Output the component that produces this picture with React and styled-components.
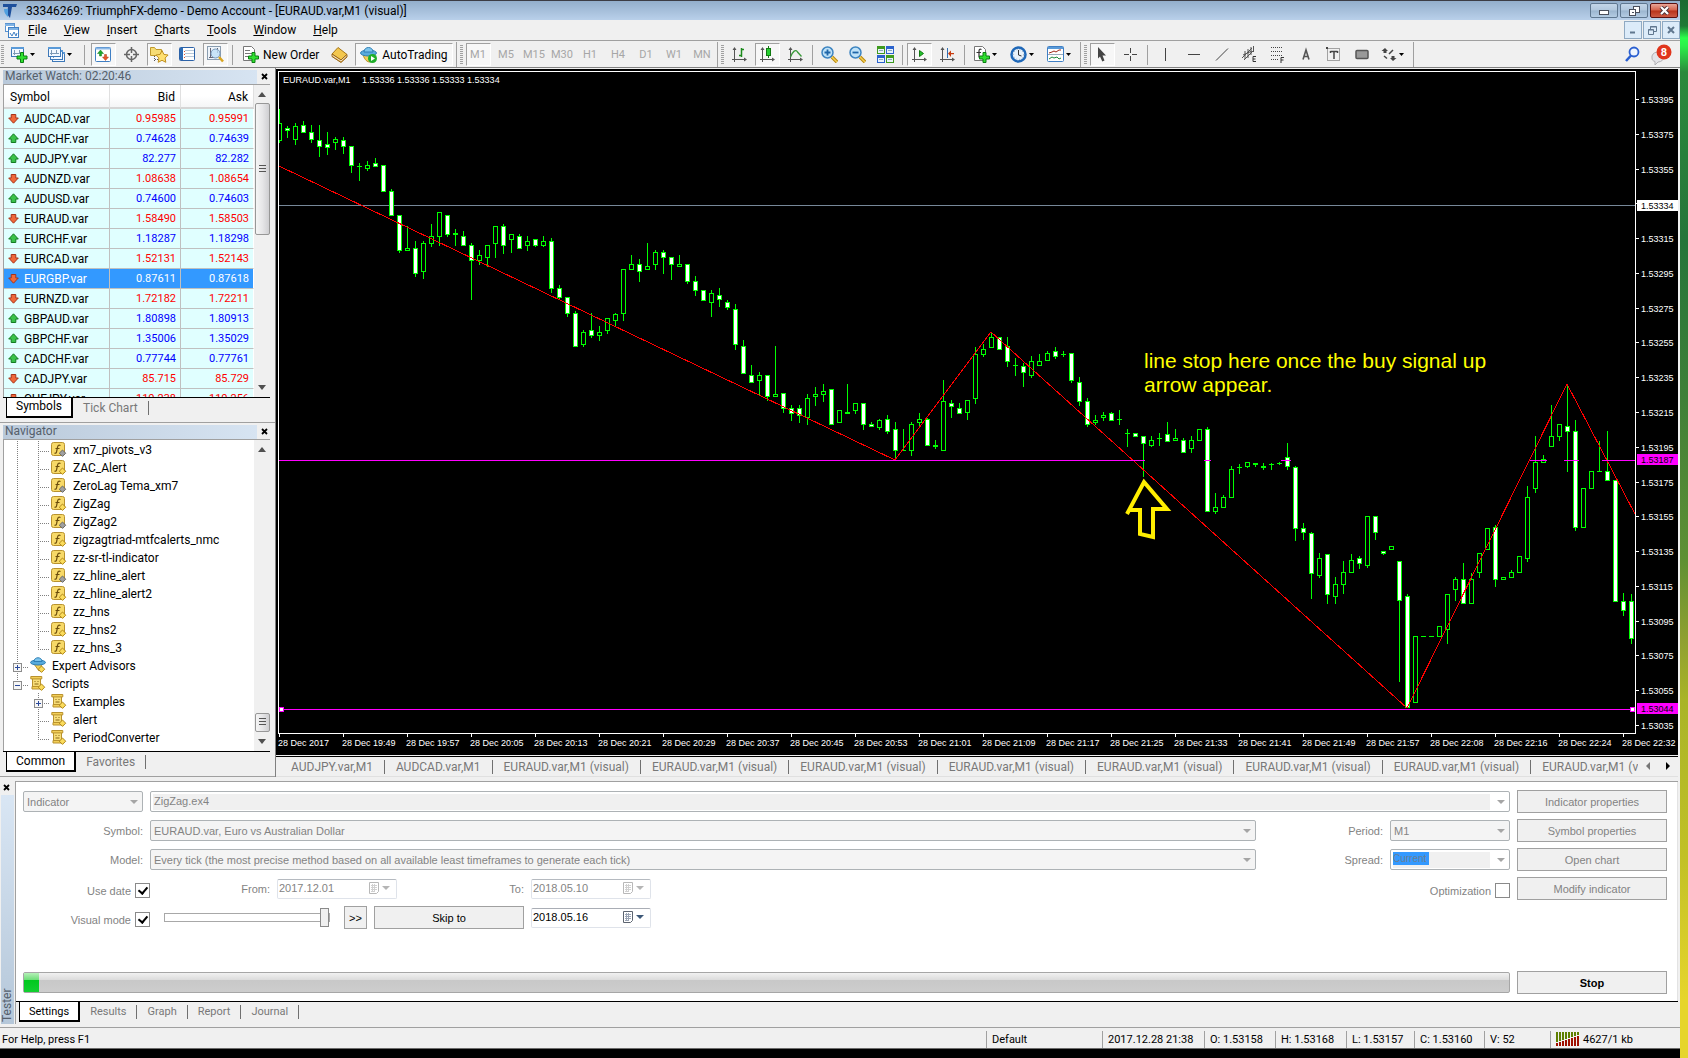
import React from 'react'
import styled, { createGlobalStyle, css } from 'styled-components'

const GlobalStyle = createGlobalStyle`
  * { box-sizing: border-box; }
  body {
    margin: 0;
    background: #000;
    font-family: Roboto, "Liberation Sans", sans-serif;
    font-size: 12px;
    color: #000;
  }
  button, input, select { font-family: inherit; font-size: inherit; margin: 0; }
`

/* ---------- data ---------- */

const symbols = [
  ['AUDCAD.var', '0.95985', '0.95991', 'down'],
  ['AUDCHF.var', '0.74628', '0.74639', 'up'],
  ['AUDJPY.var', '82.277', '82.282', 'up'],
  ['AUDNZD.var', '1.08638', '1.08654', 'down'],
  ['AUDUSD.var', '0.74600', '0.74603', 'up'],
  ['EURAUD.var', '1.58490', '1.58503', 'down'],
  ['EURCHF.var', '1.18287', '1.18298', 'up'],
  ['EURCAD.var', '1.52131', '1.52143', 'down'],
  ['EURGBP.var', '0.87611', '0.87618', 'down'],
  ['EURNZD.var', '1.72182', '1.72211', 'down'],
  ['GBPAUD.var', '1.80898', '1.80913', 'up'],
  ['GBPCHF.var', '1.35006', '1.35029', 'up'],
  ['CADCHF.var', '0.77744', '0.77761', 'up'],
  ['CADJPY.var', '85.715', '85.729', 'down'],
  ['CHFJPY.var', '110.238', '110.256', 'down'],
]

const tree = [
  { name: 'xm7_pivots_v3', icon: 'fx', grey: true, trunk: 'full', branch: 'full' },
  { name: 'ZAC_Alert', icon: 'fx', trunk: 'full', branch: 'full' },
  { name: 'ZeroLag Tema_xm7', icon: 'fx', grey: true, trunk: 'full', branch: 'full' },
  { name: 'ZigZag', icon: 'fx', trunk: 'full', branch: 'full' },
  { name: 'ZigZag2', icon: 'fx', grey: true, trunk: 'full', branch: 'full' },
  { name: 'zigzagtriad-mtfcalerts_nmc', icon: 'fx', trunk: 'full', branch: 'full' },
  { name: 'zz-sr-tl-indicator', icon: 'fx', trunk: 'full', branch: 'full' },
  { name: 'zz_hline_alert', icon: 'fx', grey: true, trunk: 'full', branch: 'full' },
  { name: 'zz_hline_alert2', icon: 'fx', trunk: 'full', branch: 'full' },
  { name: 'zz_hns', icon: 'fx', trunk: 'full', branch: 'full' },
  { name: 'zz_hns2', icon: 'fx', trunk: 'full', branch: 'full' },
  { name: 'zz_hns_3', icon: 'fx', trunk: 'full', branch: 'half' },
  { name: 'Expert Advisors', icon: 'expert', top: true, trunk: 'full', box: '+' },
  { name: 'Scripts', icon: 'script', top: true, trunk: 'half', box: '-' },
  { name: 'Examples', icon: 'script', branch: 'full', box: '+' },
  { name: 'alert', icon: 'script', branch: 'full' },
  { name: 'PeriodConverter', icon: 'script', branch: 'half' },
]

// high, body top, body bottom, low, filled
const candles = [
  [109, 123, 141, 143, 0], [126, 128, 131, 138, 1], [123, 126, 140, 145, 0], [121, 125, 133, 133, 1],
  [125, 132, 140, 143, 1], [125, 140, 147, 157, 1], [132, 144, 148, 155, 1], [137, 139, 143, 150, 0],
  [137, 140, 147, 154, 1], [146, 146, 166, 173, 1], [163, 166, 166, 181, 0], [161, 165, 169, 171, 0],
  [158, 163, 167, 167, 1], [165, 165, 192, 192, 1], [189, 191, 216, 216, 1], [215, 215, 251, 253, 1],
  [226, 248, 251, 251, 0], [241, 248, 274, 277, 1], [241, 243, 272, 279, 0], [224, 236, 244, 247, 0],
  [212, 212, 237, 246, 0], [215, 215, 235, 237, 1], [229, 233, 235, 246, 0], [231, 236, 246, 246, 1],
  [243, 245, 261, 300, 1], [250, 255, 261, 265, 0], [245, 245, 258, 267, 0], [226, 226, 244, 258, 0],
  [224, 226, 246, 254, 1], [234, 234, 240, 253, 0], [234, 236, 249, 249, 1], [236, 241, 246, 251, 0],
  [239, 239, 246, 247, 1], [236, 241, 246, 247, 0], [238, 241, 289, 293, 1], [285, 288, 298, 299, 1],
  [297, 297, 314, 317, 1], [311, 313, 347, 347, 1], [330, 332, 345, 347, 0], [313, 330, 336, 338, 1],
  [326, 332, 336, 341, 0], [318, 318, 331, 334, 0], [313, 314, 321, 326, 0], [269, 269, 314, 321, 0],
  [255, 264, 270, 270, 0], [259, 264, 272, 282, 1], [243, 266, 270, 270, 0], [250, 252, 265, 270, 0],
  [250, 252, 258, 274, 1], [257, 257, 265, 280, 1], [255, 264, 267, 267, 0], [264, 264, 282, 284, 1],
  [276, 281, 291, 296, 1], [290, 290, 301, 301, 1], [290, 293, 303, 317, 0], [288, 295, 300, 307, 1],
  [300, 302, 308, 310, 1], [304, 309, 345, 350, 1], [340, 346, 374, 374, 1], [365, 375, 383, 383, 1],
  [372, 375, 381, 396, 0], [375, 375, 397, 401, 1], [346, 394, 397, 397, 0], [393, 393, 409, 413, 1],
  [405, 408, 414, 421, 1], [405, 408, 416, 423, 1], [394, 398, 418, 425, 0], [387, 394, 397, 406, 0],
  [384, 391, 395, 402, 0], [389, 389, 425, 425, 1], [410, 410, 423, 423, 0], [384, 412, 414, 414, 0],
  [403, 403, 411, 414, 0], [403, 403, 425, 430, 1], [422, 424, 427, 427, 1], [419, 420, 428, 430, 0],
  [415, 419, 432, 434, 1], [422, 429, 451, 460, 1], [429, 450, 451, 451, 0], [422, 424, 451, 456, 0],
  [413, 419, 423, 427, 0], [418, 419, 446, 446, 1], [440, 445, 447, 449, 0], [380, 401, 451, 451, 0],
  [400, 403, 407, 418, 1], [403, 408, 414, 414, 1], [400, 400, 413, 420, 0], [347, 354, 399, 404, 0],
  [344, 349, 355, 357, 0], [333, 337, 348, 348, 0], [337, 337, 350, 350, 1], [337, 346, 362, 367, 1],
  [358, 365, 366, 376, 0], [363, 366, 373, 387, 1], [356, 361, 376, 378, 0], [354, 361, 366, 366, 0],
  [351, 353, 361, 361, 0], [347, 351, 357, 359, 1], [351, 354, 354, 357, 0], [353, 353, 381, 383, 1],
  [377, 382, 402, 406, 1], [398, 401, 425, 427, 1], [415, 420, 423, 425, 0], [412, 415, 418, 421, 0],
  [412, 413, 421, 421, 1], [410, 419, 419, 425, 0], [429, 433, 433, 447, 0], [433, 433, 437, 437, 1],
  [436, 436, 444, 477, 1], [436, 440, 446, 447, 0], [433, 438, 438, 446, 0], [422, 434, 442, 442, 1],
  [429, 438, 441, 441, 0], [438, 440, 453, 453, 1], [436, 440, 449, 453, 0], [429, 429, 441, 441, 0],
  [427, 429, 512, 512, 1], [493, 507, 512, 514, 0], [495, 497, 508, 508, 0], [466, 469, 498, 498, 0],
  [464, 467, 467, 474, 0], [462, 462, 467, 468, 0], [463, 463, 465, 467, 1], [463, 466, 468, 470, 0],
  [463, 464, 464, 470, 0], [462, 463, 463, 465, 0], [443, 457, 467, 470, 1], [466, 467, 529, 541, 1],
  [523, 528, 533, 540, 1], [532, 533, 574, 599, 1], [553, 558, 576, 578, 0], [554, 554, 595, 604, 1],
  [577, 584, 597, 604, 0], [561, 572, 585, 594, 0], [554, 560, 573, 573, 0], [556, 558, 564, 569, 1],
  [516, 516, 566, 568, 0], [516, 516, 533, 540, 1], [551, 551, 554, 555, 1], [546, 546, 550, 550, 0],
  [561, 561, 601, 682, 1], [594, 596, 708, 708, 1], [636, 636, 703, 703, 0], [636, 636, 636, 636, 0],
  [636, 636, 636, 636, 0], [626, 626, 637, 637, 0], [594, 594, 630, 644, 0], [577, 579, 590, 601, 0],
  [563, 579, 604, 604, 1], [573, 579, 604, 604, 0], [553, 553, 573, 578, 0], [528, 528, 550, 550, 0],
  [525, 527, 580, 587, 1], [577, 577, 580, 580, 0], [570, 572, 578, 578, 0], [556, 556, 573, 573, 0],
  [486, 497, 559, 562, 0], [436, 462, 489, 493, 0], [455, 459, 463, 463, 0], [405, 436, 447, 447, 0],
  [424, 424, 437, 441, 0], [385, 426, 432, 472, 1], [420, 431, 528, 531, 1], [488, 488, 528, 528, 0],
  [471, 471, 489, 489, 0], [441, 471, 471, 471, 0], [431, 471, 481, 481, 1], [480, 480, 602, 602, 1],
  [593, 601, 611, 616, 1], [594, 601, 639, 644, 1],
]

const times = ['2017', '19:49', '19:57', '20:05', '20:13', '20:21', '20:29', '20:37', '20:45', '20:53', '21:01',
  '21:09', '21:17', '21:25', '21:33', '21:41', '21:49', '21:57', '22:08', '22:16', '22:24', '22:32']

const prices = Array.from({ length: 19 }, (_, i) => 395 - i * 20)

const marks = [
  { price: '1.53334', y: 129, fill: '#fff' },
  { price: '1.53187', y: 383, fill: '#ff00ff' },
  { price: '1.53044', y: 632, fill: '#ff00ff' },
]

const PLOT_TOP = 72
const STEP = 8

const chartTabs = ['AUDJPY.var,M1', 'AUDCAD.var,M1', ...Array(8).fill('EURAUD.var,M1 (visual)')]

/* ---------- window ---------- */

const Desktop = styled.div`
  display: flex;
  min-height: 100vh;
`
const Wallpaper = styled.div`
  width: 8px;
  background: linear-gradient(#1c6a32 0, #1f7a36 26px, #2bff4b 38px, #2bf04a 46px, #2b8a3c 72px, #25753a 240px,
    #3f8038 400px, #5f9034 560px, #8fa030 640px, #a9b428 700px, #c2c126 860px, #e6d52c 1000px);
`
const AppWindow = styled.div`
  flex: 1;
  min-width: 0;
  height: 100vh;
  display: flex;
  flex-direction: column;
  background: #f0f0f0;
`
const TitleBar = styled.header`
  display: flex;
  align-items: center;
  height: 20px;
  padding: 0 2px;
  border-top: 1px solid #3c3c44;
  background: linear-gradient(#93aecb, #b9d0ea);
`
const TitleText = styled.h1`
  flex: 1;
  margin: 0 0 0 7px;
  font-size: 12px;
  font-weight: 400;
`
const WinButtons = styled.div`
  display: flex;
  gap: 2px;
`
const WinButton = styled.button`
  display: flex;
  align-items: center;
  justify-content: center;
  width: 28px;
  height: 15px;
  padding: 0;
  border: 1px solid ${({ $close }) => ($close ? '#5b1010' : '#5f7790')};
  border-radius: 2px;
  background: ${({ $close }) => ($close
    ? 'linear-gradient(#e9a598, #d4614a 48%, #b8321a 52%, #cc5a44)'
    : 'linear-gradient(#c3d5e8, #b1c7dd 48%, #9bb5cf 52%, #b4cce3)')};
`
const MenuBar = styled.nav`
  display: flex;
  align-items: center;
  height: 21px;
  padding-left: 4px;
  border-bottom: 1px solid #a0a0a0;
`
const Menu = styled.button`
  padding: 0 8px 0 9px;
  border: 0;
  background: none;
  line-height: 18px;
`
const MdiButtons = styled.div`
  display: flex;
  gap: 1px;
  margin-left: auto;
`
const MdiButton = styled.button`
  display: flex;
  align-items: center;
  justify-content: center;
  width: 18px;
  height: 18px;
  padding: 0;
  border: 1px solid #8fa9c2;
  background: #dcebf9;
`

/* ---------- toolbar ---------- */

const Toolbar = styled.div`
  display: flex;
  height: 27px;
  padding-top: 1px;
  border-bottom: 1px solid #808080;
`
const ToolGroup = styled.div`
  display: flex;
  align-items: center;
  gap: 3px;
  padding: 0 ${({ $tight }) => ($tight ? 2 : 3)}px 0 ${({ $first }) => ($first ? 1 : 3)}px;
  border-right: 1px solid #a0a0a0;
`
const Grip = styled.span`
  width: 3px;
  height: 20px;
  background: repeating-linear-gradient(#a0a0a0 0 1px, transparent 1px 2px);
`
const Sep = styled.span`
  width: 1px;
  height: 20px;
  margin: 0 ${({ $wide }) => ($wide ? 3 : 1)}px;
  background: #a0a0a0;
`
const Tool = styled.button`
  display: flex;
  align-items: center;
  justify-content: center;
  width: ${({ $drop }) => ($drop ? 34 : 25)}px;
  height: 23px;
  padding: 0;
  border: 1px solid transparent;
  background: none;
  ${({ $on }) => $on && css`
    border-color: #a0a0a0 #fff #fff #a0a0a0;
    background: #f7f7f7;
  `}
`
const LabelTool = styled(Tool)`
  width: auto;
  gap: 4px;
  padding: 0 4px;
  white-space: nowrap;
`
const PeriodTool = styled(Tool)`
  color: #a6a6a6;
  font-size: 11px;
`
const ToolEnd = styled.div`
  display: flex;
  align-items: center;
  gap: 4px;
  margin-left: auto;
  padding-right: 6px;
`

/* ---------- side panels ---------- */

const Middle = styled.main`
  flex: 1;
  min-height: 0;
  display: flex;
`
const Sidebar = styled.aside`
  flex: none;
  width: 276px;
  display: grid;
  grid-template-rows: 1fr 1fr;
  border-right: 1px solid #808080;
`
const Panel = styled.section`
  display: flex;
  flex-direction: column;
  min-height: 0;
  padding: 2px 5px 2px 3px;
  border-bottom: 1px solid #a0a0a0;
`
const PanelTitle = styled.div`
  display: flex;
  height: 14px;
  line-height: 13px;
  color: #55606c;
`
const PanelName = styled.h2`
  flex: 1;
  margin: 0 2px 0 0;
  padding-left: 2px;
  font-size: 12px;
  font-weight: 400;
  background: linear-gradient(90deg, #b9c9da, #d7e4f2);
`
const CloseButton = styled.button`
  display: flex;
  align-items: center;
  justify-content: center;
  width: 11px;
  height: 13px;
  padding: 0;
  border: 0;
  background: none;
`
const ListBox = styled.div`
  flex: 1;
  min-height: 0;
  display: flex;
  border: solid #a0a0a0;
  border-width: 1px 0 0 1px;
  background: #fff;
`
const ListBody = styled.div`
  flex: 1;
  min-width: 0;
  overflow: hidden;
`
const Quotes = styled.table`
  width: 100%;
  border-spacing: 0;
  table-layout: fixed;
`
const Th = styled.th`
  height: 24px;
  padding: 2px 5px 0 6px;
  border-right: 1px solid #e0e0e0;
  border-bottom: 2px solid #d5d5d5;
  background: linear-gradient(#fff 50%, #f4f5f6);
  font-weight: 400;
  text-align: ${({ $num }) => ($num ? 'right' : 'left')};
`
const QuoteRow = styled.tr`
  height: 20px;
  background: ${({ $selected }) => ($selected ? '#3399ff' : '#e0ffff')};
  color: ${({ $selected }) => ($selected ? '#fff' : '#000')};
`
const Td = styled.td`
  height: 20px;
  padding: 0 4px;
  border: solid #c0c0c0;
  border-width: 0 1px 1px 0;
  line-height: 16px;
  &:last-child { border-right-color: #fff; }
`
const SymbolCell = styled.span`
  display: flex;
  align-items: center;
  gap: 5px;
`
const NumTd = styled(Td)`
  font-size: 11px;
  text-align: right;
  color: ${({ $tone }) => $tone};
`
const ScrollBar = styled.div`
  width: 16px;
  display: flex;
  flex-direction: column;
  align-items: center;
  justify-content: space-between;
  padding: 7px 0;
  background: #f0f0f0;
`
const Thumb = styled.span`
  display: flex;
  align-items: center;
  justify-content: center;
  width: 15px;
  height: ${({ $size }) => $size}px;
  margin: ${({ $end }) => ($end ? 'auto 0 7px' : '6px 0 auto')};
  border: 1px solid #979797;
  border-radius: 2px;
  background: linear-gradient(90deg, #f5f5f5, #e6e6e8 50%, #cfcfd2);
`
const TabBar = styled.div`
  display: flex;
  align-items: flex-start;
  height: 23px;
  padding-left: 3px;
  border-top: 1px solid #000;
  font-size: ${({ $small }) => ($small ? 11 : 12)}px;
`
const ActiveTab = styled.button`
  height: 20px;
  padding: 0 9px;
  border: solid #000;
  border-width: 0 2px 2px 1px;
  background: #fff;
  line-height: 17px;
`
const Tab = styled.button`
  height: 14px;
  margin-top: 3px;
  padding: 0 10px;
  border: 0;
  border-right: 1px solid #707070;
  background: none;
  color: #787878;
  line-height: 12px;
  white-space: nowrap;
`
const Tree = styled.ul`
  margin: 0;
  padding: 1px 0 0;
  list-style: none;
`
const TreeItem = styled.li`
  display: flex;
  height: 18px;
  line-height: 18px;
`
const TreeIcon = styled.span`
  display: flex;
  align-items: center;
  width: 22px;
`

/* ---------- chart ---------- */

const ChartPane = styled.section`
  flex: 1;
  min-width: 0;
  display: flex;
  flex-direction: column;
  margin-top: 1px;
  padding-right: 2px;
`
const ChartFrame = styled.div`
  flex: 1;
  min-height: 0;
  display: grid;
  grid-template-columns: minmax(0, 1fr) 42px;
  grid-template-rows: minmax(0, 1fr) 21px;
  padding: 2px 0 0 2px;
  background: #000;
`
const chartFont = css`
  font-family: "Liberation Sans", sans-serif;
  font-size: 9px;
  fill: #fff;
`
const Plot = styled.svg`
  display: block;
  width: 100%;
  height: 100%;
  border: 1px solid #fff;
  ${chartFont}
`
const PriceAxis = styled.svg`
  width: 100%;
  height: 100%;
  ${chartFont}
`
const TimeAxis = styled.svg`
  grid-column: 1 / -1;
  width: 100%;
  height: 100%;
  ${chartFont}
`
const MarkText = styled.text`
  fill: #000;
`
const Note = styled.text`
  font-family: "Liberation Sans", sans-serif;
  font-size: 21px;
  fill: #ffff00;
`
const ChartTabs = styled.div`
  display: flex;
  height: 21px;
  margin-top: 1px;
  padding-left: 4px;
  border-top: 1px solid #000;
  border-bottom: 1px solid #e0e0e0;
`
const ChartTabList = styled.div`
  flex: 1;
  min-width: 0;
  display: flex;
  overflow: hidden;
`
const ChartTab = styled(Tab)`
  padding: 0 11px;
`
const ChartTabArrows = styled.div`
  display: flex;
  align-items: center;
  gap: 14px;
  padding: 0 8px 2px;
`

/* ---------- tester ---------- */

const Tester = styled.section`
  display: flex;
  padding: 4px 2px 3px 1px;
  border-bottom: 1px solid #a0a0a0;
`
const TesterRail = styled.div`
  display: flex;
  flex-direction: column;
  width: 13px;
`
const TesterName = styled.h2`
  flex: 1;
  margin: 1px 0 0;
  padding-top: 2px;
  writing-mode: vertical-rl;
  transform: rotate(180deg);
  background: linear-gradient(#b5c7d9, #d9e6f4);
  color: #55606c;
  font-size: 12px;
  font-weight: 400;
  line-height: 13px;
`
const TesterPage = styled.div`
  flex: 1;
  min-width: 0;
  margin-left: 1px;
  border: solid #a0a0a0;
  border-width: 1px 0 0 1px;
`
const Form = styled.form`
  display: grid;
  grid-template-columns: minmax(0, 1fr) 150px;
  gap: 6px 7px;
  padding: 8px 10px 7px 7px;
  border-right: 1px solid #e3e3e3;
  background: #fff;
  font-family: "Liberation Sans", sans-serif;
  font-size: 11px;
  color: #838383;
`
const Fields = styled.div`
  display: grid;
  grid-template-columns: ${({ $cols }) => $cols};
  column-gap: 7px;
  align-items: center;
  height: 23px;
`
const FieldLabel = styled.label`
  text-align: right;
`
const SelectBox = styled.span`
  position: relative;
  display: block;
  height: 21px;
  padding: ${({ $edit }) => ($edit ? '2px 19px 1px 2px' : '0')};
  border: 1px solid #adb2b5;
  border-radius: 2px;
  background: ${({ $edit }) => ($edit ? '#fff' : '#f4f4f4')};
  &::after {
    content: "";
    position: absolute;
    right: 4px;
    top: 8px;
    border: 4px solid transparent;
    border-top-color: #a5a5a5;
    border-bottom: 0;
  }
`
const Select = styled.select`
  display: block;
  width: 100%;
  height: 19px;
  padding: 0 3px;
  border: 0;
  appearance: none;
  background: none;
  color: #838383;
  opacity: 1;
`
const ComboField = styled.span`
  display: flex;
  height: 16px;
  background: #f0f0f0;
`
const ComboInput = styled.input`
  width: ${({ $marked }) => ($marked ? '36px' : '100%')};
  height: ${({ $marked }) => ($marked ? 13 : 14)}px;
  padding: 0 0 0 ${({ $marked }) => ($marked ? 0 : 1)}px;
  border: 0;
  background: ${({ $marked }) => ($marked ? '#3399ff' : 'none')};
  color: ${({ $marked }) => ($marked ? '#6a7f94' : '#838383')};
  font-size: ${({ $marked }) => ($marked ? 10 : 11)}px;
`
const CheckLabel = styled.label`
  display: flex;
  align-items: center;
  justify-content: flex-end;
  gap: 4px;
  margin-right: ${({ $over }) => ($over ? -7 : 0)}px;
  padding-top: 4px;
`
const Check = styled.input`
  appearance: none;
  width: 15px;
  height: 15px;
  border: 1px solid #8a8a8a;
  background: #fff;
  &:checked::before {
    content: "";
    display: block;
    width: 4px;
    height: 7px;
    margin: 1px 0 0 4px;
    border: solid #000;
    border-width: 0 2px 2px 0;
    transform: rotate(40deg);
  }
`
const DateBox = styled.span`
  display: flex;
  align-items: center;
  height: 20px;
  padding: 0 5px 2px 0;
  border: 1px solid #dfe3ea;
  border-top-color: ${({ $active }) => ($active ? '#a9adb5' : '#b5bac0')};
  border-radius: 2px;
  background: #fff;
`
const DateInput = styled.input`
  flex: 1;
  width: 60px;
  padding: 0 1px;
  border: 0;
  background: none;
  color: ${({ disabled }) => (disabled ? '#838383' : '#000')};
`
const SpeedRow = styled.div`
  grid-column: 2 / 5;
  display: flex;
  align-items: center;
  padding-left: 14px;
`
const Speed = styled.input`
  appearance: none;
  width: 166px;
  height: 9px;
  margin-right: 14px;
  border: 1px solid #a8a8a8;
  background: #fff;
  &::-webkit-slider-thumb {
    appearance: none;
    width: 9px;
    height: 19px;
    border: 1px solid #8a8a8a;
    background: #f0f0f0;
  }
`
const Button = styled.button`
  height: 23px;
  padding: 0;
  border: 1px solid #a0a0a0;
  background: #f0f0f0;
  color: ${({ disabled }) => (disabled ? '#838383' : '#000')};
  font-weight: ${({ $strong }) => ($strong ? 700 : 400)};
`
const StepButton = styled(Button)`
  width: 23px;
  margin-right: 7px;
`
const SkipButton = styled(Button)`
  flex: 1;
`
const Progress = styled.div`
  height: 21px;
  margin-top: 1px;
  border: 1px solid #a6a6a6;
  border-radius: 2px;
  background: linear-gradient(#f1f1f1, #dcdcdc 36%, #c8c8c8 38%, #cdcdcd);
`
const ProgressFill = styled.div`
  height: 100%;
  background: linear-gradient(#b5f0b8, #6ede78 36%, #00c81e 38%, #12cf30);
`
const Spacer = styled.div`
  grid-column: 1 / -1;
  height: 30px;
`

/* ---------- status bar ---------- */

const StatusBar = styled.footer`
  display: flex;
  align-items: center;
  height: 21px;
  padding-top: 2px;
  border-bottom: 1px solid #6c6c6c;
  font-size: 11px;
`
const HelpText = styled.span`
  flex: 1;
  padding-left: 2px;
`
const StatusCell = styled.span`
  display: flex;
  align-items: center;
  gap: 3px;
  width: ${({ $w }) => $w}px;
  height: 17px;
  padding-left: 5px;
  border-left: 1px solid #a0a0a0;
`
const TaskEdge = styled.div`
  height: 9px;
  background: #000;
`

/* ---------- drawings ---------- */

const Svg = ({ w = 17, h = 17, children }) => (
  <svg width={w} height={h} viewBox={`0 0 ${w} ${h}`} fill="none" aria-hidden="true">{children}</svg>
)

const Plus = ({ x, y }) => (
  <path d={`M${x + 3.5} ${y}h3v3.5h3.5v3h-3.5v3.5h-3v-3.5h-3.500v-3h3.500z`} fill="#2fe02f" stroke="#0b7d12" />
)

const Caret = () => <Svg w={9} h={5}><path d="M2 1h5L4.500 4z" fill="#000" /></Svg>

const Axes = ({ children }) => (
  <Svg>
    <path d="M3.500 2v14M1 13.500h13" stroke="#555" />
    <path d="M1.500 4l2-3 2 3zM13 11.500l3 2-3 2z" fill="#555" />
    {children}
  </Svg>
)

const MiniChart = ({ x, y }) => (
  <g>
    <rect x={x + 0.5} y={y + 0.5} width="12" height="9" fill="#f2f8ff" stroke="#3d78b8" />
    <rect x={x} y={y} width="13" height="2" fill="#5a9ad8" />
    <path d={`M${x + 3.5} ${y + 3}v5M${x + 2} ${y + 6.5}h9M${x + 8.5} ${y + 3}v3`} stroke="#7c99b5" />
  </g>
)

const icons = {
  newChart: <Svg><MiniChart x={0} y={1} /><Plus x={6} y={6.5} /></Svg>,
  profiles: <Svg><MiniChart x={4} y={6} /><MiniChart x={2} y={4} /><MiniChart x={0} y={1} /></Svg>,
  watch: (
    <Svg>
      <rect x=".5" y="1.500" width="15" height="14" rx="1" fill="#fff" stroke="#3f7fc4" />
      <path d="M.5 2.500h15" stroke="#8bb8e6" strokeWidth="2" />
      <path d="M5.500 4l3 3.500h-2V10h-2V7.500h-2z" fill="#18a82c" stroke="#127a1c" strokeWidth=".5" />
      <path d="M10.500 14.500l-3-3.500h2V8.500h2V11h2z" fill="#e8562a" stroke="#a83a18" strokeWidth=".5" />
    </Svg>
  ),
  target: (
    <Svg>
      <circle cx="8.500" cy="8.500" r="5" stroke="#666" strokeWidth="1.500" />
      <path d="M8.500 1v6M8.500 10v6M1 8.500h6M10 8.500h6" stroke="#666" strokeWidth="1.500" />
    </Svg>
  ),
  navigator: (
    <Svg w={19} h={17}>
      <path d="M.5 9.500v-8h4l1.500 2h5.500v6z" fill="#f6dc74" stroke="#c09a2c" />
      <path d="M4.500 10v6M5 13.500h3" stroke="#555" strokeDasharray="1 1" />
      <path d="M12 4.500l1.900 3.900 4.200.6-3 3 .7 4.300-3.800-2-3.800 2 .7-4.300-3-3 4.200-.6z" fill="#ffe070" stroke="#bf9020" />
    </Svg>
  ),
  terminal: (
    <Svg>
      <rect x=".5" y="1.500" width="15" height="13" rx="1" fill="#fff" stroke="#2c62a8" />
      <rect x="1" y="2" width="3" height="12" fill="#2f6db5" />
      <path d="M6 4.500h9M6 7.500h9M6 10.500h9" stroke="#b8c8d8" />
      <path d="M5 5.500h1M5 8.500h1M5 11.500h1" stroke="#e05030" />
    </Svg>
  ),
  tester: (
    <Svg>
      <rect x=".5" y=".5" width="13" height="13" fill="#eef4fa" stroke="#8a9db0" />
      <path d="M3.500 2v10M10.500 2v5M2 11.500h5" stroke="#667" />
      <circle cx="8.500" cy="7.500" r="4.500" fill="#bfe0f8" fillOpacity=".8" stroke="#7898b8" />
      <path d="M12 11l4 4.500" stroke="#d9a520" strokeWidth="2.500" />
    </Svg>
  ),
  order: (
    <Svg>
      <path d="M1.500.5h8l3 3v11h-11z" fill="#fff" stroke="#777" />
      <path d="M3 4.500h5M3 7.500h7M3 10.500h5" stroke="#777" />
      <Plus x={6.5} y={6.5} />
    </Svg>
  ),
  book: (
    <Svg>
      <path d="M1 8l6-6.500 9 7L10 14z" fill="#f3c74e" stroke="#a87818" />
      <path d="M1 8v2.500l9 6 6-5.500V8.500L10 14z" fill="#c78d20" stroke="#98661a" />
      <path d="M1.500 9.500L10 15l5.500-5" stroke="#fff" strokeWidth=".8" />
    </Svg>
  ),
  auto: (
    <Svg w={18} h={18}>
      <path d="M3 9c2 5 4 7 7 7s4-3 4-7z" fill="#f2cf5a" stroke="#b88d20" />
      <ellipse cx="8.500" cy="7" rx="8" ry="3" fill="#58abdc" stroke="#2f7fb5" />
      <path d="M4 6c0-6 9-6 9 0z" fill="#7cc4ec" stroke="#2f7fb5" />
      <circle cx="12.500" cy="12.500" r="4.500" fill="#1fae2a" />
      <path d="M11 10l4 2.500-4 2.500z" fill="#fff" />
    </Svg>
  ),
  bars: <Axes><path d="M10.500 2v9M8 9.500h2.500M10.500 3.500H13" stroke="#1c8a1c" strokeWidth="1.500" /></Axes>,
  candle: <Axes><path d="M9.500 0v12" stroke="#127a12" /><rect x="7.500" y="2.500" width="4" height="7" fill="#25cf2f" stroke="#127a12" /></Axes>,
  line: <Axes><path d="M3.500 11c2.500-6 5-8 7-5l4 4.500" stroke="#3a9a3a" strokeWidth="1.300" /></Axes>,
  zoomIn: (
    <Svg>
      <circle cx="6.500" cy="6.500" r="5.500" fill="#bfe2f8" stroke="#3d84c0" strokeWidth="1.500" />
      <path d="M3.500 6.500h6M6.500 3.500v6" stroke="#1f66a8" strokeWidth="1.800" />
      <path d="M11 11l5 5" stroke="#b8860b" strokeWidth="3.500" /><path d="M11 11l5 5" stroke="#f4cf52" strokeWidth="1.500" />
    </Svg>
  ),
  zoomOut: (
    <Svg>
      <circle cx="6.500" cy="6.500" r="5.500" fill="#bfe2f8" stroke="#3d84c0" strokeWidth="1.500" />
      <path d="M3.500 6.500h6" stroke="#1f66a8" strokeWidth="1.800" />
      <path d="M11 11l5 5" stroke="#b8860b" strokeWidth="3.500" /><path d="M11 11l5 5" stroke="#f4cf52" strokeWidth="1.500" />
    </Svg>
  ),
  tile: (
    <Svg>
      <path d="M0 0h8v8H0zM9 9h8v8H9z" fill="#3f9a1e" /><path d="M9 0h8v8H9zM0 9h8v8H0z" fill="#2a62cc" />
      <path d="M1 3h6v4H1zM10 3h6v4h-6zM1 12h6v4H1zM10 12h6v4h-6z" fill="#e9f2fb" />
      <path d="M2 4.500h4M11 4.500h4M2 13.500h4M11 13.500h4" stroke="#8ab" />
    </Svg>
  ),
  scroll: <Axes><path d="M8.500 4.500l4 3-4 3z" fill="#22c02c" stroke="#127a12" /></Axes>,
  shift: <Axes><path d="M8.500 2v10" stroke="#2f6fb3" /><path d="M9 7.500l3-3V7h3v1.200h-3V11z" fill="#c83c10" /></Axes>,
  indicators: (
    <Svg>
      <path d="M1.500.5h8l3 3v11h-11z" fill="#fff" stroke="#777" />
      <path d="M8.500 3.500c-2-1-2.500 0-2.500 2v6M3.500 6.500H8" stroke="#333" strokeWidth="1.200" />
      <Plus x={6.5} y={6.5} />
    </Svg>
  ),
  clock: (
    <Svg>
      <circle cx="8.500" cy="8.500" r="7" fill="#e8f2fb" stroke="#1f68b8" strokeWidth="2.500" />
      <path d="M8.500 4v5l3 1" stroke="#333" />
      <circle cx="8.500" cy="8.500" r="5" stroke="#9ab" strokeDasharray="1 2" />
    </Svg>
  ),
  template: (
    <Svg>
      <rect x=".5" y=".5" width="16" height="15" rx="1" fill="#fff" stroke="#3f7fc4" />
      <path d="M1 2h15" stroke="#5a9ad8" strokeWidth="2" /><path d="M1 8.500h15" stroke="#9ab" />
      <path d="M2 7l3-1 2-1 2 1 3-2h2" stroke="#a02818" /><path d="M2 13l3-2 2 1 3-1 2 2 2-1" stroke="#1c8a3a" />
    </Svg>
  ),
  cursor: <Svg><path d="M4 1l8 8.500H8.500l2 5-2.200 1L6 10.500 4 12.500z" fill="#444" /></Svg>,
  cross: <Svg><path d="M8.500 2v5M8.500 10v5M2 8.500h5M10 8.500h5" stroke="#444" /></Svg>,
  vline: <Svg><path d="M9.500 2v13" stroke="#444" /></Svg>,
  hline: <Svg><path d="M4 8.500h12" stroke="#444" /></Svg>,
  trend: <Svg><path d="M4 14.500L16 2.500" stroke="#444" /></Svg>,
  channel: (
    <Svg>
      <path d="M2 12L12 2M4 14L14 4M5 5v8M8 3v9M11 1v8M13.500 0v6M3 9l9-4" stroke="#555" />
      <path d="M16 10.500h-3v5h3M13 13h2.500" stroke="#333" />
    </Svg>
  ),
  fibo: (
    <Svg>
      <path d="M3 1.500h12M3 5.500h12M3 9.500h12M3 13.500h8" stroke="#444" strokeDasharray="1 1" />
      <path d="M16 11.500h-3V17M13 14h2.500" stroke="#333" />
    </Svg>
  ),
  textA: <Svg><path d="M7 13.500L10 4l3 9.500M8 10.500h4" stroke="#555" strokeWidth="1.600" /></Svg>,
  label: (
    <Svg>
      <rect x="3.500" y="2.500" width="12" height="12" stroke="#555" strokeDasharray="1 1" />
      <path d="M6.500 5.500h7M10 5.500V13M6.500 5v2M13.500 5v2" stroke="#444" strokeWidth="1.500" />
      <rect x="2" y="1" width="2" height="2" fill="#444" />
    </Svg>
  ),
  rect: <Svg><rect x="4" y="4.500" width="12" height="8" rx="1" fill="#999" stroke="#555" strokeWidth="1.500" /></Svg>,
  arrows: (
    <Svg>
      <path d="M5 2l3 3H6.500v2h-3V5H1.500z" fill="#444" />
      <path d="M13 15l-3-3h1.500v-2h3v2h2z" fill="#444" /><path d="M4 10l3 2.500M9 8l4-4" stroke="#444" strokeWidth="1.500" />
    </Svg>
  ),
}

const QuoteArrow = ({ dir }) => (
  <svg width="11" height="11" viewBox="0 0 11 11" aria-hidden="true">
    {dir === 'up'
      ? <path d="M5.500.8L10.300 6H7.800v3.500H3.200V6H.7z" fill="#39c24a" stroke="#147a22" />
      : <path d="M5.500 10.200L10.300 5H7.800V1.500H3.200V5H.7z" fill="#f0693a" stroke="#a5341a" />}
  </svg>
)

const Cross = () => <Svg w={7} h={7}><path d="M1 1l5 5M6 1L1 6" stroke="#000" strokeWidth="1.800" /></Svg>

const ArrowUp = () => <Svg w={8} h={5}><path d="M4 0l4 5H0z" fill="#505050" /></Svg>
const ArrowDown = () => <Svg w={8} h={5}><path d="M4 5l4-5H0z" fill="#505050" /></Svg>
const ThumbGrip = () => <Svg w={7} h={9}><path d="M0 .5h7M0 3.500h7M0 6.500h7" stroke="#555" /></Svg>

const NodeIcon = ({ kind, grey }) => (
  <svg width="17" height="17" viewBox="0 0 17 17" aria-hidden="true">
    {kind === 'fx' && (
      <>
        <rect x=".5" y="1.500" width="13" height="13" rx="2" fill="#f7d968" stroke="#b9922e" />
        <path d="M9.500 4.500c-2-1.200-2.700.3-3 2L5.500 11c-.4 1.200-1 1.500-2 1M4.500 7.500h4" fill="none" stroke="#6b4d0c" strokeWidth="1.200" />
      </>
    )}
    {kind === 'script' && (
      <>
        <path d="M2.500 3.500h8v8l1 2h-8l-1-2z" fill="#f7dd78" stroke="#b9922e" />
        <path d="M.8 1.500h11v2.400h-11zM2 11.500h9v2.500H2z" fill="#f3cf58" stroke="#b9922e" />
        <path d="M4.500 6.500h1M7.500 6.500h1M4.500 9h4" stroke="#8a6818" />
      </>
    )}
    {kind === 'expert' && (
      <>
        <path d="M4 7h7l1 5-3 2z" fill="#f3cf58" stroke="#b9922e" />
        <ellipse cx="8" cy="5.500" rx="7.500" ry="2.500" fill="#58abdc" stroke="#2f7fb5" />
        <path d="M4 4.500c0-5 8-5 8 0z" fill="#7cc4ec" stroke="#2f7fb5" />
      </>
    )}
    <path d="M11.500 9l3.200 3.200-3.200 3.200-3.200-3.200z" fill={grey ? '#a0a0a0' : '#fbdc5c'} stroke={grey ? '#666' : '#b08618'} />
  </svg>
)

const Guides = ({ item }) => {
  const w = item.top ? 26 : 47
  const boxX = item.top ? 13 : 34
  const dots = { stroke: '#808080', strokeDasharray: '1 1' }
  return (
    <svg width={w} height="18" fill="none" shapeRendering="crispEdges" aria-hidden="true">
      {item.trunk && <path d={`M13.500 0v${item.trunk === 'full' ? 18 : 10}`} {...dots} />}
      {item.branch && <path d={`M34.500 0v${item.branch === 'full' ? 18 : 10}`} {...dots} />}
      <path d={`M${boxX} 10.500H${w - 2}`} {...dots} />
      {item.box && (
        <>
          <rect x={boxX - 3.5} y="6.500" width="8" height="8" fill="#f6f6f6" stroke="#8c8c8c" />
          <path d={`M${boxX - 2} 10.500h5${item.box === '+' ? `M${boxX + 0.5} 8v5` : ''}`} stroke="#2b4a9b" />
        </>
      )}
    </svg>
  )
}

const Calendar = ({ active }) => (
  <svg width="22" height="14" viewBox="0 0 22 14" aria-hidden="true">
    <path d="M.5 1.500h9v9l-2 2h-7z" fill="#fff" stroke={active ? '#5c6470' : '#b8b8b8'} />
    <path d="M2 4.500h6M2 6.500h6M2 8.500h6M2 10.500h4M3.500 3v8M5.500 3v8" stroke={active ? '#9aa4b4' : '#d0d0d0'} />
    <path d="M13 5h8l-4 4z" fill={active ? '#3d5878' : '#b5b5b5'} />
  </svg>
)

/* ---------- parts ---------- */

const T = ({ icon, on, drop }) => (
  <Tool type="button" $on={on} $drop={drop} aria-label={icon}>{icons[icon]}{drop && <Caret />}</Tool>
)

function MainToolbar() {
  return (
    <Toolbar>
      <ToolGroup $first>
        <Grip />
        <T icon="newChart" drop /><T icon="profiles" drop />
        <Sep $wide />
        <T icon="watch" on /><T icon="target" /><T icon="navigator" on /><T icon="terminal" /><T icon="tester" on />
        <Sep />
        <LabelTool type="button">{icons.order}New Order</LabelTool>
        <T icon="book" />
        <LabelTool type="button" $on>{icons.auto}AutoTrading</LabelTool>
      </ToolGroup>
      <ToolGroup $tight>
        <Grip />
        {['M1', 'M5', 'M15', 'M30', 'H1', 'H4', 'D1', 'W1', 'MN'].map((p) => (
          <PeriodTool type="button" key={p} $on={p === 'M1'}>{p}</PeriodTool>
        ))}
      </ToolGroup>
      <ToolGroup>
        <Grip />
        <T icon="bars" /><T icon="candle" on /><T icon="line" />
        <Sep />
        <T icon="zoomIn" /><T icon="zoomOut" /><T icon="tile" />
        <Sep />
        <T icon="scroll" on /><T icon="shift" />
        <Sep />
        <T icon="indicators" drop /><T icon="clock" drop /><T icon="template" drop />
      </ToolGroup>
      <ToolGroup>
        <Grip />
        <T icon="cursor" on /><T icon="cross" />
        <Sep />
        <T icon="vline" /><T icon="hline" /><T icon="trend" /><T icon="channel" /><T icon="fibo" />
        <T icon="textA" /><T icon="label" /><T icon="rect" /><T icon="arrows" drop />
      </ToolGroup>
      <ToolEnd>
        <Tool type="button" aria-label="Search">
          <Svg>
            <circle cx="10" cy="6" r="4.500" fill="#eef5ff" stroke="#2a5fd0" strokeWidth="1.800" />
            <path d="M7 9.500l-5 5.500" stroke="#2a5fd0" strokeWidth="2.500" />
          </Svg>
        </Tool>
        <Tool type="button" aria-label="Notifications">
          <Svg w={21} h={21}>
            <path d="M1 14a6 5 0 1 1 6 4l-3 3v-3.500C2 17 1 16 1 14z" fill="#e4e4e8" stroke="#b0b0b4" />
            <circle cx="13" cy="8" r="7.500" fill="#e0351c" />
            <text x="13" y="12" textAnchor="middle" fontSize="11" fontWeight="700" fill="#fff">8</text>
          </Svg>
        </Tool>
      </ToolEnd>
    </Toolbar>
  )
}

function MarketWatch() {
  return (
    <Panel>
      <PanelTitle>
        <PanelName>Market Watch: 02:20:46</PanelName>
        <CloseButton type="button" aria-label="Close"><Cross /></CloseButton>
      </PanelTitle>
      <ListBox>
        <ListBody>
          <Quotes>
            <colgroup><col width="106" /><col width="71" /><col /></colgroup>
            <thead><tr><Th>Symbol</Th><Th $num>Bid</Th><Th $num>Ask</Th></tr></thead>
            <tbody>
              {symbols.map(([name, bid, ask, dir]) => {
                const selected = name === 'EURGBP.var'
                const tone = selected ? '#fff' : dir === 'up' ? '#0000ff' : '#ff0000'
                return (
                  <QuoteRow key={name} $selected={selected}>
                    <Td><SymbolCell><QuoteArrow dir={dir} />{name}</SymbolCell></Td>
                    <NumTd $tone={tone}>{bid}</NumTd>
                    <NumTd $tone={tone}>{ask}</NumTd>
                  </QuoteRow>
                )
              })}
            </tbody>
          </Quotes>
        </ListBody>
        <ScrollBar><ArrowUp /><Thumb $size={132}><ThumbGrip /></Thumb><ArrowDown /></ScrollBar>
      </ListBox>
      <TabBar><ActiveTab type="button">Symbols</ActiveTab><Tab type="button">Tick Chart</Tab></TabBar>
    </Panel>
  )
}

function Navigator() {
  return (
    <Panel>
      <PanelTitle>
        <PanelName>Navigator</PanelName>
        <CloseButton type="button" aria-label="Close"><Cross /></CloseButton>
      </PanelTitle>
      <ListBox>
        <ListBody>
          <Tree>
            {tree.map((item) => (
              <TreeItem key={item.name}>
                <Guides item={item} />
                <TreeIcon><NodeIcon kind={item.icon} grey={item.grey} /></TreeIcon>
                {item.name}
              </TreeItem>
            ))}
          </Tree>
        </ListBody>
        <ScrollBar><ArrowUp /><Thumb $size={19} $end><ThumbGrip /></Thumb><ArrowDown /></ScrollBar>
      </ListBox>
      <TabBar><ActiveTab type="button">Common</ActiveTab><Tab type="button">Favorites</Tab></TabBar>
    </Panel>
  )
}

const Candle = ({ x, data: [high, top, bottom, low, filled] }) => {
  const h = Math.max(1, bottom - top)
  return (
    <g>
      <rect x={x} y={high} width="1" height={Math.max(1, low - high)} fill="#00ff00" />
      <rect x={x - 2} y={top} width="5" height={h} fill="#00ff00" />
      {h > 2 && <rect x={x - 1} y={top + 1} width="3" height={h - 2} fill={filled ? '#fff' : '#000'} />}
    </g>
  )
}

function Chart() {
  return (
    <ChartPane>
      <ChartFrame>
        <Plot>
          <g transform={`translate(0 ${-PLOT_TOP})`} shapeRendering="crispEdges">
            <rect x="0" y="205" width="100%" height="1" fill="#778899" />
            {candles.map((c, i) => <Candle key={i} x={i * STEP} data={c} />)}
            <path d="M0 166L616 460L712 332L1128 708L1288 384L1356 514" fill="none" stroke="#ff0000" />
            <path d="M0 460.500H866M925 460.500h7M1002 460.500h10M1251 460.500h17M1285 460.500h15M1323 460.500h33" stroke="#ff00ff" />
            <rect x="0" y="709" width="100%" height="1" fill="#ff00ff" />
            <path d="M.5 707.500h4v4h-4zM1351.500 707.500h4v4h-4z" fill="#fff" stroke="#ff00ff" />
          </g>
          <g transform={`translate(0 ${-PLOT_TOP})`}>
            <path d="M848 514l17-32 23 27h-14v28l-13-3v-24h-12" fill="none" stroke="#ffee00" strokeWidth="4" />
            <text x="4" y="83">EURAUD.var,M1</text>
            <text x="83" y="83">1.53336 1.53336 1.53333 1.53334</text>
            <Note x="865" y="368">line stop here once the buy signal up</Note>
            <Note x="865" y="392">arrow appear.</Note>
          </g>
        </Plot>
        <PriceAxis>
          {prices.map((p) => {
            const y = Math.round(28 + (395 - p) * 1.739)
            return (
              <g key={p}>
                <rect x="0" y={y} width="3" height="1" fill="#fff" />
                {p !== 335 && <text x="5" y={y + 4}>{`1.53${String(p).padStart(3, '0')}`}</text>}
              </g>
            )
          })}
          {marks.map((m) => (
            <g key={m.price}>
              <rect x="1" y={m.y} width="41" height="11" fill={m.fill} />
              <MarkText x="5" y={m.y + 9}>{m.price}</MarkText>
            </g>
          ))}
        </PriceAxis>
        <TimeAxis>
          {times.map((t, i) => (
            <g key={t}>
              <rect x={1 + i * 64} y="0" width="1" height="3" fill="#fff" />
              <text x={i * 64} y="12">28 Dec {t}</text>
            </g>
          ))}
        </TimeAxis>
      </ChartFrame>
      <ChartTabs>
        <ChartTabList>{chartTabs.map((t, i) => <ChartTab type="button" key={i}>{t}</ChartTab>)}</ChartTabList>
        <ChartTabArrows>
          <Svg w={5} h={8}><path d="M4 0v8L0 4z" fill="#777" /></Svg>
          <Svg w={5} h={8}><path d="M1 0v8l4-4z" fill="#000" /></Svg>
        </ChartTabArrows>
      </ChartTabs>
    </ChartPane>
  )
}

const Drop = ({ id, value, label }) => (
  <SelectBox><Select id={id} disabled aria-label={label} defaultValue={value}><option>{value}</option></Select></SelectBox>
)

const DateField = ({ id, value, disabled, label }) => (
  <DateBox $active={!disabled}>
    <DateInput id={id} defaultValue={value} disabled={disabled} aria-label={label} />
    <Calendar active={!disabled} />
  </DateBox>
)

const wide = '120px minmax(0, 1fr) 120px 120px'
const columns = 'repeat(5, 120px) minmax(0, 1fr)'

function StrategyTester() {
  return (
    <Tester>
      <TesterRail>
        <CloseButton type="button" aria-label="Close"><Cross /></CloseButton>
        <TesterName>Tester</TesterName>
      </TesterRail>
      <TesterPage>
        <Form onSubmit={(e) => e.preventDefault()}>
          <Fields $cols="120px minmax(0, 1fr)">
            <Drop value="Indicator" label="Type" />
            <SelectBox $edit><ComboField><ComboInput aria-label="Expert" defaultValue="ZigZag.ex4" disabled /></ComboField></SelectBox>
          </Fields>
          <Button type="button" disabled>Indicator properties</Button>

          <Fields $cols={wide}>
            <FieldLabel htmlFor="symbol">Symbol:</FieldLabel>
            <Drop id="symbol" value="EURAUD.var, Euro vs Australian Dollar" />
            <FieldLabel htmlFor="period">Period:</FieldLabel>
            <Drop id="period" value="M1" />
          </Fields>
          <Button type="button" disabled>Symbol properties</Button>

          <Fields $cols={wide}>
            <FieldLabel htmlFor="model">Model:</FieldLabel>
            <Drop id="model" value="Every tick (the most precise method based on all available least timeframes to generate each tick)" />
            <FieldLabel htmlFor="spread">Spread:</FieldLabel>
            <SelectBox $edit><ComboField><ComboInput id="spread" $marked defaultValue="Current" disabled /></ComboField></SelectBox>
          </Fields>
          <Button type="button" disabled>Open chart</Button>

          <Fields $cols={columns}>
            <CheckLabel $over>Use date<Check type="checkbox" defaultChecked /></CheckLabel>
            <FieldLabel htmlFor="from">From:</FieldLabel>
            <DateField id="from" value="2017.12.01" disabled />
            <FieldLabel htmlFor="to">To:</FieldLabel>
            <DateField id="to" value="2018.05.10" disabled />
            <CheckLabel>Optimization<Check type="checkbox" /></CheckLabel>
          </Fields>
          <Button type="button" disabled>Modify indicator</Button>

          <Fields $cols={columns}>
            <CheckLabel $over>Visual mode<Check type="checkbox" defaultChecked /></CheckLabel>
            <SpeedRow>
              <Speed type="range" defaultValue="100" aria-label="Speed" />
              <StepButton type="button">&gt;&gt;</StepButton>
              <SkipButton type="button">Skip to</SkipButton>
            </SpeedRow>
            <DateField value="2018.05.16" label="Skip to date" />
          </Fields>
          <Spacer />
          <Progress><ProgressFill style={{ width: '1%' }} /></Progress>
          <Button type="button" $strong>Stop</Button>
        </Form>
        <TabBar $small>
          <ActiveTab type="button">Settings</ActiveTab>
          {['Results', 'Graph', 'Report', 'Journal'].map((t) => <Tab type="button" key={t}>{t}</Tab>)}
        </TabBar>
      </TesterPage>
    </Tester>
  )
}

function App() {
  return (
    <Desktop>
      <GlobalStyle />
      <AppWindow>
        <TitleBar>
          <Svg>
            <path d="M1 2h14l-1 3h-4L8 16 5 12l1-7H1z" fill="#1d4f9c" />
            <path d="M2 7c0 4 2 6 4 8V7z" fill="#4f9fe0" />
          </Svg>
          <TitleText>33346269: TriumphFX-demo - Demo Account - [EURAUD.var,M1 (visual)]</TitleText>
          <WinButtons>
            <WinButton type="button" aria-label="Minimize"><Svg w={10} h={9}><rect x=".5" y="4.500" width="9" height="4" fill="#fff" stroke="#4a4f5c" /></Svg></WinButton>
            <WinButton type="button" aria-label="Restore">
              <Svg w={11} h={10}>
                <rect x="4.500" y=".5" width="6" height="6" fill="#fff" stroke="#4a4f5c" />
                <rect x=".5" y="3.500" width="6" height="6" fill="#fff" stroke="#4a4f5c" /><path d="M3 6.500h2" stroke="#4a4f5c" />
              </Svg>
            </WinButton>
            <WinButton type="button" $close aria-label="Close window">
              <Svg w={11} h={9}><path d="M2 1l7 7M9 1L2 8" stroke="#4a3038" strokeWidth="4" /><path d="M2 1l7 7M9 1L2 8" stroke="#fff" strokeWidth="2.200" /></Svg>
            </WinButton>
          </WinButtons>
        </TitleBar>
        <MenuBar>
          <Svg w={15} h={15}>
            <rect x="1.500" y=".5" width="9" height="8" fill="#fff" stroke="#5a93d0" />
            <rect x="4.500" y="4.500" width="10" height="10" fill="#fff" stroke="#3f7fc4" />
            <path d="M1 2h9M5 6h9" stroke="#7fb2e4" strokeWidth="2" /><path d="M6 10l2 3 2-4 2 4 1-3" stroke="#3f7fc4" />
          </Svg>
          {['File', 'View', 'Insert', 'Charts', 'Tools', 'Window', 'Help'].map((m) => (
            <Menu type="button" key={m}><u>{m[0]}</u>{m.slice(1)}</Menu>
          ))}
          <MdiButtons>
            <MdiButton type="button" aria-label="Minimize chart"><Svg w={8} h={8}><path d="M1 6.500h5" stroke="#60778f" strokeWidth="2" /></Svg></MdiButton>
            <MdiButton type="button" aria-label="Restore chart">
              <Svg w={9} h={9}><path d="M2.500 3V.5h6v5H6M.5 3.500h5v5h-5zM2 1h6.500M.5 4h5" stroke="#60778f" /></Svg>
            </MdiButton>
            <MdiButton type="button" aria-label="Close chart"><Svg w={8} h={8}><path d="M1 1l6 6M7 1L1 7" stroke="#60778f" strokeWidth="2" /></Svg></MdiButton>
          </MdiButtons>
        </MenuBar>
        <MainToolbar />
        <Middle>
          <Sidebar>
            <MarketWatch />
            <Navigator />
          </Sidebar>
          <Chart />
        </Middle>
        <StrategyTester />
        <StatusBar>
          <HelpText>For Help, press F1</HelpText>
          <StatusCell $w={116}>Default</StatusCell>
          <StatusCell $w={102}>2017.12.28 21:38</StatusCell>
          <StatusCell $w={71}>O: 1.53158</StatusCell>
          <StatusCell $w={71}>H: 1.53168</StatusCell>
          <StatusCell $w={68}>L: 1.53157</StatusCell>
          <StatusCell $w={70}>C: 1.53160</StatusCell>
          <StatusCell $w={66}>V: 52</StatusCell>
          <StatusCell $w={130}>
            <Svg w={24} h={14}>
              {[0, 1, 2, 3, 4, 5, 6, 7].map((i) => (
                <g key={i}>
                  <rect x={i * 3} y="0" width="2" height={10 - i} fill="#5f7f00" />
                  <rect x={i * 3} y={11 - i} width="2" height={3 + i} fill="#a01000" />
                </g>
              ))}
            </Svg>
            4627/1 kb
          </StatusCell>
        </StatusBar>
        <TaskEdge />
      </AppWindow>
      <Wallpaper />
    </Desktop>
  )
}

export default App
